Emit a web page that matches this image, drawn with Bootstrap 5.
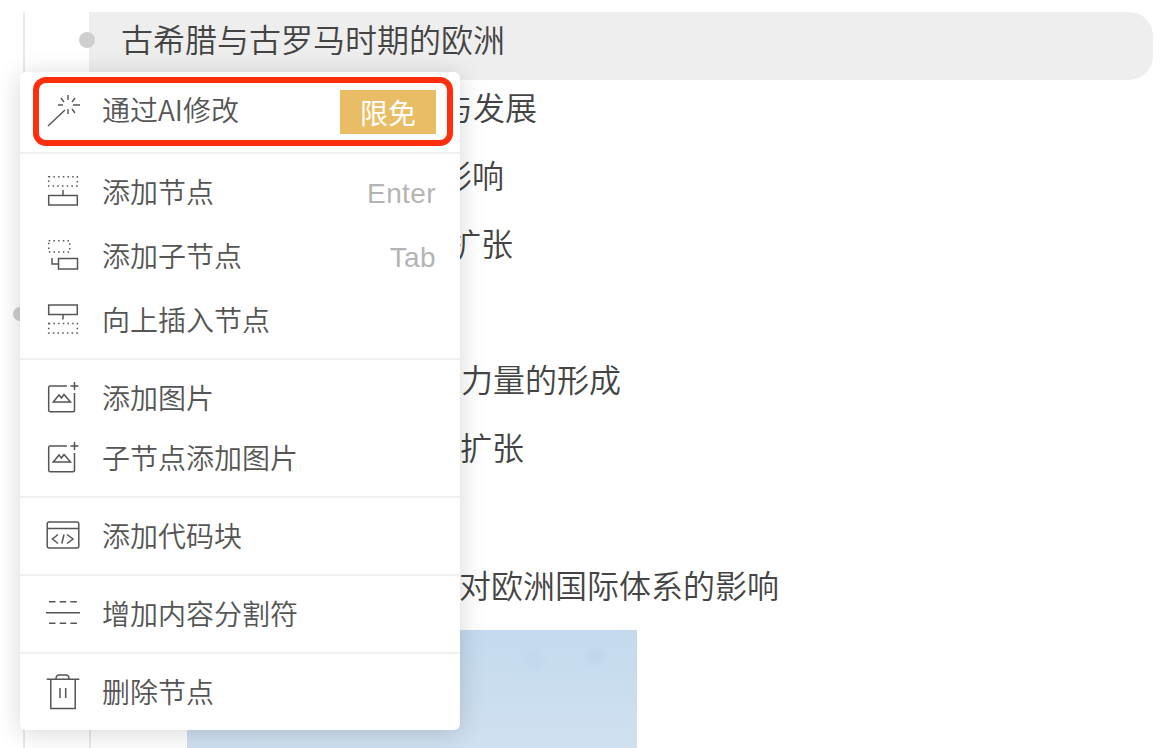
<!DOCTYPE html>
<html lang="zh">
<head>
<meta charset="utf-8">
<title>大纲节点菜单</title>
<link href="https://cdn.jsdelivr.net/npm/bootstrap@5.3.0/dist/css/bootstrap.min.css" rel="stylesheet">
<style>
html,body{height:748px;overflow:hidden;background:#fff;}
body{font-family:"Noto Sans CJK SC",sans-serif;color:#444;position:relative;}
.tree-outer{margin:12px 0 0 23px;border-left:2px solid #e9e9e9;height:736px;}
.tree-inner{margin-left:64px;border-left:2px solid #e9e9e9;height:736px;}
.node-line{position:relative;height:68px;font-size:32px;line-height:52px;white-space:nowrap;font-weight:350;}
.node-active{background:#eee;margin-left:-2px;margin-right:9px;border-radius:0 24px 24px 0;padding-left:32px;}
.node-dot{position:absolute;border-radius:50%;background:#cfcfcf;}
.dot-first{width:16px;height:16px;left:79px;top:32px;}
.dot-top{width:14px;height:14px;left:13px;top:307px;}
.pad-a{padding-left:350px;}
.pad-b{padding-left:349px;}
.pad-c{padding-left:358px;}
.pad-d{padding-left:370px;}
.pad-e{padding-left:369px;}
.pad-f{padding-left:368px;padding-top:2px;}
.node-picture{margin:6px 0 0 96px;width:450px;height:118px;background:
 radial-gradient(circle at 408px 27px,rgba(175,202,228,.4) 0,rgba(175,202,228,0) 13px),
 radial-gradient(circle at 347px 30px,rgba(178,204,230,.25) 0,rgba(178,204,230,0) 15px),
 linear-gradient(180deg,#c3daee 0,#d0e0f0 100%);}
.ctx-menu.dropdown-menu{position:absolute;left:20px;top:72px;width:440px;padding:0;margin:0;border:0;border-radius:6px;min-width:0;background:#fff;box-shadow:0 3px 26px rgba(0,0,0,.16);font-size:28px;color:#555;}
.ctx-item.dropdown-item{display:flex;align-items:center;gap:22px;padding:0 24px 0 26px;height:64px;font-size:28px;line-height:40px;color:#555;font-weight:350;background:transparent;}
.ctx-item svg{flex:none;width:34px;height:34px;overflow:visible;fill:none;stroke:#555;stroke-width:1.5;}
.ctx-item svg .dotted{stroke-dasharray:1.5 3.2;}
.ctx-label{margin-top:-2px;}
.ctx-short{height:60px !important;}
.ctx-ai.dropdown-item{width:auto;height:69px;margin:5px 7px 6px 13px;padding:0 11px 0 7px;border:6px solid #ff2e0c;border-radius:13px;}
.ctx-ai-label{margin-top:-6px;}
.ctx-hint{margin-left:auto;margin-top:4px;font-family:"Liberation Sans",sans-serif;color:#b4b4b4;font-size:28px;letter-spacing:.4px;}
.ctx-free{margin-left:auto;width:96px;height:44px;background:#e9bd66;color:#fff;font-size:28px;line-height:44px;text-align:center;font-weight:400;}
.ctx-group{padding:6px 0;}
.ctx-group-img{padding:8px 0;}
.ctx-menu .dropdown-divider{margin:0;border-top:2px solid #f0f0f0;opacity:1;}
</style>
</head>
<body>
<div class="tree-outer">
  <div class="tree-inner">
    <div class="node-line node-active">古希腊与古罗马时期的欧洲</div>
    <div class="node-line pad-a">与发展</div>
    <div class="node-line pad-b">影响</div>
    <div class="node-line pad-c">扩张</div>
    <div class="node-line"></div>
    <div class="node-line pad-d">力量的形成</div>
    <div class="node-line pad-e">扩张</div>
    <div class="node-line"></div>
    <div class="node-line pad-f">对欧洲国际体系的影响</div>
    <div class="node-picture"></div>
  </div>
</div>
<span class="node-dot dot-first"></span>
<span class="node-dot dot-top"></span>

<div class="ctx-menu dropdown-menu show">
  <a class="ctx-item ctx-ai dropdown-item" href="#">
    <svg viewBox="46 93 34 34"><path d="M48 124 65 108M68 93v5M68 107v5M58 103h5M73 103h7M61 96l3 4M75 96l-3 4M72 107l3 4" stroke-width="1.4"/></svg>
    <span class="ctx-ai-label">通过AI修改</span><span class="ctx-free">限免</span>
  </a>
  <hr class="dropdown-divider">
  <div class="ctx-group">
    <a class="ctx-item dropdown-item" href="#">
      <svg viewBox="46 175 34 34"><rect class="dotted" x="48.7" y="176.7" width="28.6" height="9.3"/><path d="M63 190v5"/><rect x="48.7" y="195.5" width="28.6" height="9.5"/></svg>
      <span class="ctx-label">添加节点</span><span class="ctx-hint">Enter</span>
    </a>
    <a class="ctx-item dropdown-item" href="#">
      <svg viewBox="46 239 34 34"><rect class="dotted" x="48.7" y="240.7" width="21" height="11.3"/><rect x="58.5" y="258.5" width="19" height="10.5"/><path d="M52 258v6h6.5"/></svg>
      <span class="ctx-label">添加子节点</span><span class="ctx-hint">Tab</span>
    </a>
    <a class="ctx-item dropdown-item" href="#">
      <svg viewBox="46 303 34 34"><rect x="48.7" y="305" width="28.6" height="9.5"/><path d="M63 314.5v5"/><rect class="dotted" x="48.7" y="323.5" width="28.6" height="9.5"/></svg>
      <span class="ctx-label">向上插入节点</span>
    </a>
  </div>
  <hr class="dropdown-divider">
  <div class="ctx-group-img">
    <a class="ctx-item ctx-short dropdown-item" href="#">
      <svg viewBox="46 381 34 34"><path d="M67 386H50.2a1.5 1.5 0 0 0-1.5 1.5v22.7a1.5 1.5 0 0 0 1.5 1.5h22.8a1.5 1.5 0 0 0 1.5-1.5V393M74.5 382v8M70.5 386h8M53.3 402h17.2L64 394.5 61.5 398 59 395z"/></svg>
      <span class="ctx-label">添加图片</span>
    </a>
    <a class="ctx-item ctx-short dropdown-item" href="#">
      <svg viewBox="46 441 34 34"><path d="M67 446H50.2a1.5 1.5 0 0 0-1.5 1.5v22.7a1.5 1.5 0 0 0 1.5 1.5h22.8a1.5 1.5 0 0 0 1.5-1.5V453M74.5 442v8M70.5 446h8M53.3 462h17.2L64 454.5 61.5 458 59 455z"/></svg>
      <span class="ctx-label">子节点添加图片</span>
    </a>
  </div>
  <hr class="dropdown-divider">
  <div class="ctx-group">
    <a class="ctx-item dropdown-item" href="#">
      <svg viewBox="46 519 34 34"><rect x="47.2" y="522" width="31.6" height="26" rx="2"/><path d="M47.2 528.5h31.6M58 534.5 52.5 539l5.5 4.5M67 534.5l6 4.5-6 4.5M61.8 543.5l2.2-9"/></svg>
      <span class="ctx-label">添加代码块</span>
    </a>
  </div>
  <hr class="dropdown-divider">
  <div class="ctx-group">
    <a class="ctx-item dropdown-item" href="#">
      <svg viewBox="46 597 34 34"><path d="M49 601.7h28M49 623.3h28" stroke-dasharray="6.5 4.2"/><path d="M46 612.7h34"/></svg>
      <span class="ctx-label">增加内容分割符</span>
    </a>
  </div>
  <hr class="dropdown-divider">
  <div class="ctx-group">
    <a class="ctx-item dropdown-item" href="#">
      <svg viewBox="46 675 34 34"><path d="M46.7 679.3h32.6M50.8 679.3v29.3h24.4v-29.3M56 679c0-3 1.5-4 3-4h7c1.5 0 3 1 3 4M60 688v10M65.7 688v10"/></svg>
      <span class="ctx-label">删除节点</span>
    </a>
  </div>
</div>
<script src="https://cdn.jsdelivr.net/npm/bootstrap@5.3.0/dist/js/bootstrap.bundle.min.js"></script>
</body>
</html>
